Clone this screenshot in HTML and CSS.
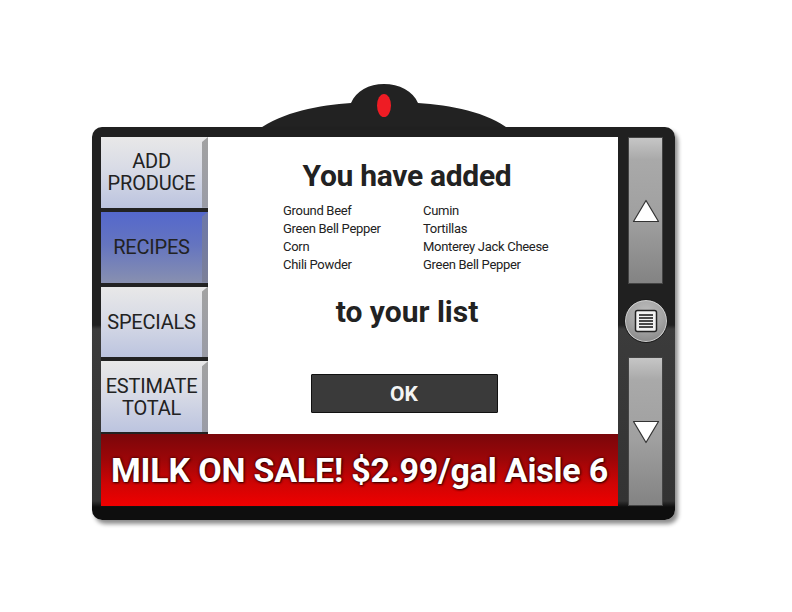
FILE: index.html
```html
<!DOCTYPE html>
<html>
<head>
<meta charset="utf-8">
<link rel="stylesheet" href="styles.css">
</head>
<body>
<div class="stage">
  <svg class="bump" width="792" height="140" viewBox="0 0 792 140">
    <path d="M258,130 C282,112 320,105 351,103 C356,91 369,84 384,84 C399,84 413,91 418,103 C450,105 488,112 510,130 Z" fill="#222"/>
    <ellipse cx="384" cy="105.5" rx="7" ry="11.5" fill="#ee1c24"/>
  </svg>
  <div class="device">
    <div class="main">
      <div class="top">
        <nav class="nav">
          <div class="navbtn">ADD<br>PRODUCE</div>
          <div class="navbtn active">RECIPES</div>
          <div class="navbtn">SPECIALS</div>
          <div class="navbtn">ESTIMATE<br>TOTAL</div>
        </nav>
        <section class="panel">
          <h1 class="title">You have added</h1>
          <div class="items">
            <span>Ground Beef</span><span>Cumin</span>
            <span>Green Bell Pepper</span><span>Tortillas</span>
            <span>Corn</span><span>Monterey Jack Cheese</span>
            <span>Chili Powder</span><span>Green Bell Pepper</span>
          </div>
          <h2 class="subtitle">to your list</h2>
          <button class="ok">OK</button>
        </section>
      </div>
      <div class="banner">MILK ON SALE! $2.99/gal Aisle 6</div>
    </div>
    <div class="side">
      <div class="scroll">
        <svg width="28" height="24" viewBox="0 0 28 24"><path d="M14,1.5 L26.5,22.5 L1.5,22.5 Z" fill="#fff" stroke="#333" stroke-width="1.2" stroke-linejoin="round"/></svg>
      </div>
      <div class="hub">
        <div class="menu">
          <svg width="24" height="24" viewBox="0 0 24 24">
            <rect x="1.5" y="1.5" width="21" height="21" rx="2" fill="#f2f2f2" stroke="#222" stroke-width="1.5"/>
            <path d="M5,6 H19 M5,9 H19 M5,12 H19 M5,15 H19 M5,18 H19" stroke="#111" stroke-width="1.6"/>
          </svg>
        </div>
      </div>
      <div class="scroll down">
        <svg width="28" height="24" viewBox="0 0 28 24"><path d="M14,22.5 L26.5,1.5 L1.5,1.5 Z" fill="#fff" stroke="#333" stroke-width="1.2" stroke-linejoin="round"/></svg>
      </div>
    </div>
  </div>
</div>
</body>
</html>
```

FILE: styles.css
```css
* { box-sizing: border-box; }
html, body { margin: 0; padding: 0; background: #fff; }
body { font-family: Roboto, "Liberation Sans", sans-serif; }

.stage {
  position: relative;
  width: 792px;
  height: 612px;
  padding: 127px 0 0 92px;
}

.bump {
  position: absolute;
  left: 0;
  top: 0;
}

.device {
  position: relative;
  width: 583px;
  height: 393px;
  border-radius: 10px;
  padding: 10px 12px 14px 9px;
  display: flex;
  gap: 10px;
  background: linear-gradient(to bottom, #202020 0, #202020 198px, #3b3b3b 202px, #333 374px, #0e0e0e 380px, #0e0e0e 100%);
  box-shadow: 3px 4px 4px rgba(0, 0, 0, 0.45);
}

.main {
  width: 517px;
  display: flex;
  flex-direction: column;
}

.top {
  display: flex;
  height: 297px;
}

.nav {
  width: 107px;
  display: flex;
  flex-direction: column;
  background: #222;
}

.navbtn {
  position: relative;
  flex: 1;
  margin-bottom: 4px;
  padding-right: 6px;
  display: flex;
  align-items: center;
  justify-content: center;
  text-align: center;
  font-size: 20px;
  line-height: 22px;
  color: #222;
  letter-spacing: -0.2px;
  background: linear-gradient(to bottom, #e8e8e8 0%, #d8dbe6 45%, #bcc4df 100%);
}
.navbtn:last-child { margin-bottom: 2px; }

.navbtn::after {
  content: "";
  position: absolute;
  right: 0;
  top: 0;
  bottom: 0;
  width: 6px;
  background: linear-gradient(to bottom, #a2a2a2, #9a9ca6);
  clip-path: polygon(0 5px, 100% 0, 100% 100%, 0 100%);
}

.navbtn.active {
  background: linear-gradient(to bottom, #5468cc 0%, #6474c0 45%, #8890b0 100%);
}
.navbtn.active::after {
  background: linear-gradient(to bottom, #6c77a8, #7c8098);
}

.panel {
  flex: 1;
  background: #fff;
  padding: 24px 12px 0 0;
  display: flex;
  flex-direction: column;
  align-items: center;
}

.title {
  margin: 0;
  font-size: 30px;
  line-height: 30px;
  font-weight: 700;
  color: #222;
  letter-spacing: -0.3px;
}

.items {
  align-self: flex-start;
  margin: 11px 0 0 75px;
  display: grid;
  grid-template-columns: 140px 140px;
  font-size: 13px;
  line-height: 18px;
  color: #222;
  letter-spacing: -0.3px;
}

.subtitle {
  margin: 23px 0 0;
  font-size: 30px;
  line-height: 30px;
  font-weight: 700;
  color: #222;
  letter-spacing: 0;
}

.ok {
  margin: 47px 6px 0 0;
  width: 187px;
  height: 39px;
  background: #3a3a3a;
  border: 1px solid #111;
  border-radius: 1px;
  color: #f4f4f4;
  font-family: Roboto, "Liberation Sans", sans-serif;
  font-size: 21px;
  font-weight: 700;
  padding: 0;
}

.banner {
  height: 72px;
  display: flex;
  align-items: center;
  justify-content: center;
  background: linear-gradient(to bottom, #7a060a 0%, #9c0608 35%, #d00404 70%, #f00000 100%);
  color: #fff;
  font-size: 34px;
  font-weight: 700;
  letter-spacing: -0.2px;
  text-shadow: 0 0 3px rgba(0, 0, 0, 0.85), 1px 1px 2px rgba(0, 0, 0, 0.6);
}

.side {
  width: 35px;
  display: flex;
  flex-direction: column;
}

.scroll {
  height: 147px;
  border: 1px solid #444;
  background: linear-gradient(to bottom, #c6c6c6 0%, #a9a9a9 15%, #a0a0a0 55%, #838383 100%);
  display: flex;
  align-items: center;
  justify-content: center;
}
.scroll.down {
  height: 149px;
}

.hub {
  flex: 1;
  display: flex;
  align-items: center;
  justify-content: center;
}

.menu {
  flex: none;
  width: 44px;
  height: 44px;
  border-radius: 50%;
  border: 1px solid #1a1a1a;
  background: radial-gradient(circle at 50% 30%, #bdbdbd 0%, #a2a2a2 50%, #7b7b7b 100%);
  box-shadow: inset 0 0 0 1px #cfcfcf;
  display: flex;
  align-items: center;
  justify-content: center;
}
.menu svg { display: block; }
```
